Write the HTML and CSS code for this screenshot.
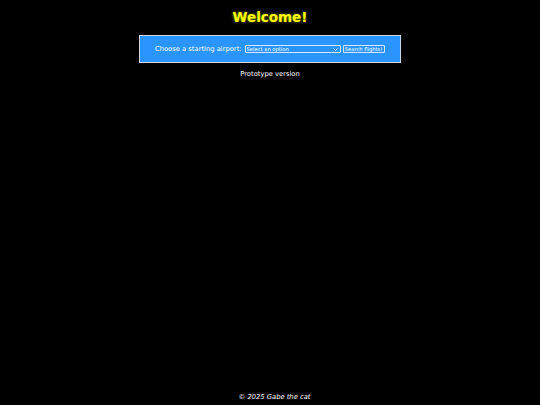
FILE: index.html
```html
<!DOCTYPE html>
<html lang="en">
<head>
<meta charset="utf-8">
<title>Welcome</title>
<link rel="stylesheet" href="styles.css">
</head>
<body>
<div class="page">
  <h1 class="title">Welcome!</h1>
  <form class="search">
    <label class="search-label" for="airport">Choose a starting airport:</label>
    <span class="select-wrap">
      <select id="airport" class="search-select">
        <option>Select an option</option>
      </select>
      <svg class="select-arrow" width="5" height="3" viewBox="0 0 5 3" aria-hidden="true"><path d="M0.5 0.5 L2.5 2.5 L4.5 0.5" fill="none" stroke="#fff" stroke-width="0.9"/></svg>
    </span>
    <button type="button" class="search-button">Search flights!</button>
  </form>
  <p class="note">Prototype version</p>
</div>
<footer class="footer">© 2025 Gabe the cat</footer>
</body>
</html>
```
FILE: styles.css
```css
html {
  background: #000;
}
body {
  margin: 0;
  min-height: 100vh;
  display: flex;
  flex-direction: column;
  background: #000;
  color: #fff;
  font-family: "DejaVu Sans", Verdana, sans-serif;
  font-size: 6.75px;
}
.page {
  flex: 1;
  display: flex;
  flex-direction: column;
  align-items: center;
}
.title {
  margin: 9px 0 10px;
  font-size: 13.5px;
  line-height: 16px;
  font-weight: bold;
  color: #ffff00;
  text-shadow: 0 0 3px rgba(255, 255, 0, 0.55);
}
.search {
  display: flex;
  align-items: center;
  width: 262px;
  height: 28px;
  box-sizing: border-box;
  padding: 0 15px 0 15px;
  background: #2b95ff;
  border: 1px solid #c9d6ee;
  white-space: nowrap;
}
.search-label {
  margin-right: 3px;
  flex: none;
}
.select-wrap {
  position: relative;
  flex: none;
  display: flex;
  margin-right: 2px;
}
.search-select {
  -webkit-appearance: none;
  appearance: none;
  width: 96px;
  height: 8px;
  box-sizing: border-box;
  margin: 0;
  padding: 0 0 0 1px;
  background: transparent;
  color: #fff;
  border: 1px solid #d8e6ff;
  border-radius: 1px;
  font-family: "DejaVu Sans", Verdana, sans-serif;
  font-size: 5.2px;
  line-height: 6px;
}
.select-arrow {
  position: absolute;
  right: 3px;
  top: 2.5px;
  pointer-events: none;
}
.search-button {
  flex: none;
  width: 42px;
  height: 8px;
  box-sizing: border-box;
  margin: 0;
  padding: 0;
  background: transparent;
  color: #fff;
  border: 1px solid #d8e6ff;
  border-radius: 1px;
  font-family: "DejaVu Sans", Verdana, sans-serif;
  font-size: 5.2px;
  line-height: 6px;
}
.note {
  margin: 7px 0;
  line-height: 8px;
}
.footer {
  text-align: center;
  font-style: italic;
  line-height: 8px;
  padding: 0 0 4px 9px;
}
```
